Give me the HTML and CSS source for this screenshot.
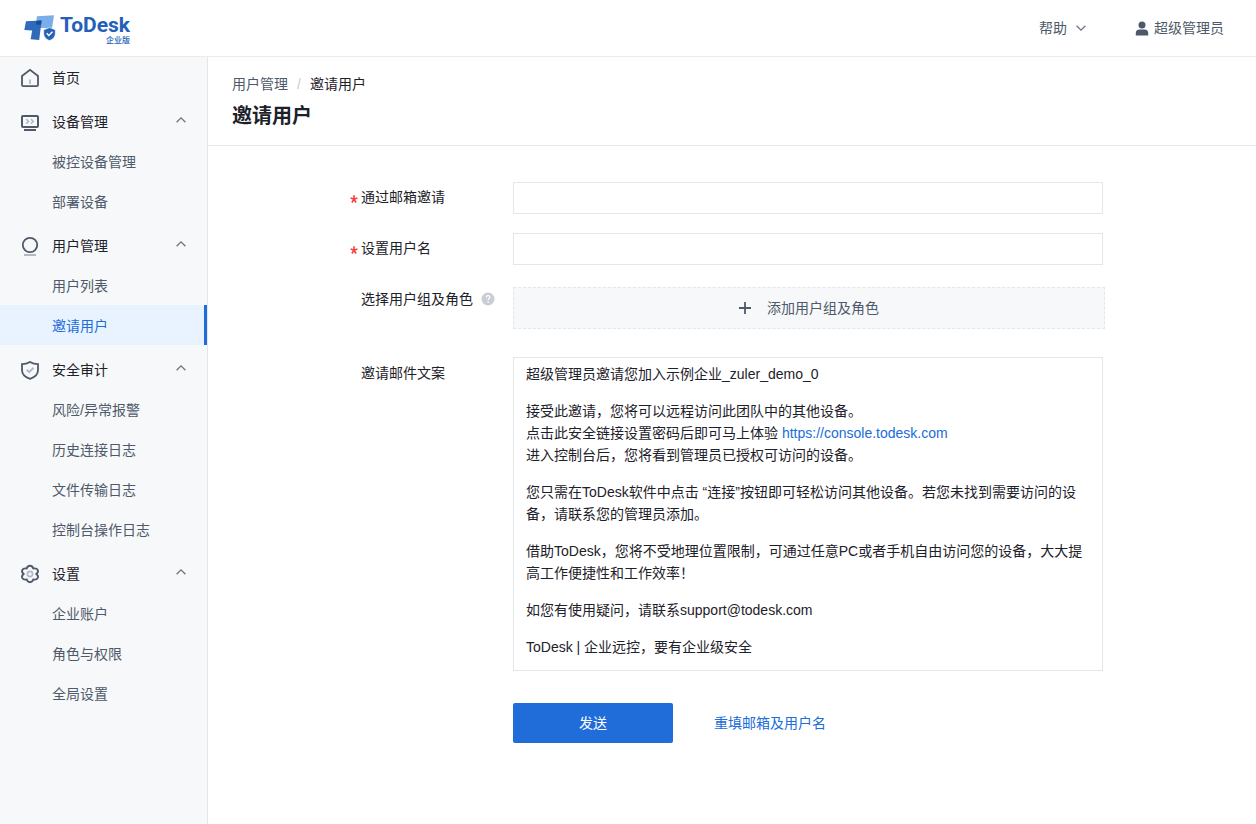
FILE: index.html
```html
<!DOCTYPE html>
<html lang="zh-CN">
<head>
<meta charset="utf-8">
<meta name="viewport" content="width=device-width, initial-scale=1">
<title>邀请用户 - ToDesk 企业版</title>
<link rel="stylesheet" href="styles.css">
</head>
<body>
<svg class="sprite" aria-hidden="true">
  <symbol id="chevron" viewBox="0 0 12 8"><path d="M1.600 6.200 6 1.900l4.400 4.300" fill="none" stroke="currentColor" stroke-width="1.300"/></symbol>
  <symbol id="asterisk" viewBox="0 0 8 8"><path d="M4 .2v4M.6 3l3.400 1.200L7.400 3M1.900 7.500 4 4.200l2.100 3.300" fill="none" stroke="currentColor" stroke-width="1.600"/></symbol>
</svg>
<div class="app">
  <header class="topbar">
    <a class="logo" href="#">
      <svg class="logo-mark" viewBox="0 0 32 26" aria-hidden="true">
        <path d="M13 1.200 30 .300 28 13H11.500z" fill="#7aade9"/>
        <path d="M2 6.200 17.600 5.400 15.200 25 6.600 24.300 8.200 15.600.300 15z" fill="#2f6abb"/>
        <path d="M12.500 5.700 17.600 5.400 17 9.800H12z" fill="#184c98"/>
        <path d="M25.500 12.600 31.300 14.800V19c0 3-2.400 5.200-5.800 6.600-3.400-1.400-5.800-3.600-5.800-6.600v-4.200z" fill="#2563b8" stroke="#fff" stroke-width=".6"/>
        <path d="m22.700 18.300 2.100 2.100 3.700-3.600" fill="none" stroke="#fff" stroke-width="1.400"/>
      </svg>
      <span class="logo-text"><span class="logo-name">ToDesk</span><span class="logo-edition">企业版</span></span>
    </a>
    <div class="top-actions">
      <button class="top-button" type="button">帮助<svg class="chevron chevron-down"><use href="#chevron"/></svg></button>
      <button class="top-button account" type="button">
        <svg class="person" viewBox="0 0 14 15" aria-hidden="true"><circle cx="7" cy="3.900" r="3.500" fill="currentColor"/><path d="M.8 14.600V12c0-2.200 1.400-3.600 3.600-3.600h5.200c2.200 0 3.600 1.400 3.600 3.600v2.600z" fill="currentColor"/></svg>超级管理员</button>
    </div>
  </header>

  <div class="body">
    <nav class="sidebar" aria-label="主导航">
      <a class="nav-head" href="#">
        <svg class="nav-icon" viewBox="0 0 20 20"><path d="M2 8 10 1.800 18 8v9q0 1.200-1.200 1.200H3.200Q2 18.200 2 17z" fill="none" stroke="#4e5969" stroke-width="1.800"/><path d="M10 11.500V16" stroke="#b4b9c2" stroke-width="1.700"/></svg>
        <span>首页</span>
      </a>

      <section class="nav-group">
        <button class="nav-head" type="button" aria-expanded="true">
          <svg class="nav-icon" viewBox="0 0 20 20"><rect x="2" y="4" width="16" height="11" rx="1" fill="none" stroke="#4e5969" stroke-width="2"/><path d="M4 18h12" stroke="#4e5969" stroke-width="2"/><path d="m6.300 7.200 2.300 2.200-2.300 2.200M11 7.200l2.300 2.200-2.300 2.200" fill="none" stroke="#b4b9c2" stroke-width="1.600"/></svg>
          <span>设备管理</span><svg class="chevron"><use href="#chevron"/></svg>
        </button>
        <a class="nav-item" href="#">被控设备管理</a>
        <a class="nav-item" href="#">部署设备</a>
      </section>

      <section class="nav-group">
        <button class="nav-head" type="button" aria-expanded="true">
          <svg class="nav-icon" viewBox="0 0 20 20"><circle cx="10" cy="9" r="7.200" fill="none" stroke="#4e5969" stroke-width="1.800"/><path d="M4 19h12" stroke="#b4b9c2" stroke-width="2"/></svg>
          <span>用户管理</span><svg class="chevron"><use href="#chevron"/></svg>
        </button>
        <a class="nav-item" href="#">用户列表</a>
        <a class="nav-item active" href="#" aria-current="page">邀请用户</a>
      </section>

      <section class="nav-group">
        <button class="nav-head" type="button" aria-expanded="true">
          <svg class="nav-icon" viewBox="0 0 20 20"><path d="M10 1.900q3.500 2.200 8 2.200V10c0 4.300-3.400 7.300-8 8.800C5.400 17.300 2 14.300 2 10V4.100q4.500 0 8-2.200z" fill="none" stroke="#4e5969" stroke-width="1.800"/><path d="m6.800 9.800 2.400 2.300 4.300-4.300" fill="none" stroke="#b4b9c2" stroke-width="2"/></svg>
          <span>安全审计</span><svg class="chevron"><use href="#chevron"/></svg>
        </button>
        <a class="nav-item" href="#">风险/异常报警</a>
        <a class="nav-item" href="#">历史连接日志</a>
        <a class="nav-item" href="#">文件传输日志</a>
        <a class="nav-item" href="#">控制台操作日志</a>
      </section>

      <section class="nav-group">
        <button class="nav-head" type="button" aria-expanded="true">
          <svg class="nav-icon" viewBox="0 0 20 20"><path d="M16.400 10Q18.600 8.200 17.800 6.200 16.600 3.800 13.300 4.500 12.300 1.800 10 1.800T6.700 4.500Q3.400 3.800 2.200 6.200 1.400 8.200 3.600 10 1.400 11.800 2.200 13.800 3.400 16.200 6.700 15.500 7.700 18.200 10 18.200T13.300 15.500Q16.600 16.200 17.800 13.800 18.600 11.800 16.400 10z" fill="none" stroke="#4e5969" stroke-width="1.900"/><circle cx="10" cy="10" r="2.600" fill="none" stroke="#b4b9c2" stroke-width="1.700"/></svg>
          <span>设置</span><svg class="chevron"><use href="#chevron"/></svg>
        </button>
        <a class="nav-item" href="#">企业账户</a>
        <a class="nav-item" href="#">角色与权限</a>
        <a class="nav-item" href="#">全局设置</a>
      </section>
    </nav>

    <main class="content">
      <div class="page-head">
        <div class="breadcrumb"><a href="#">用户管理</a><span class="slash">/</span><span>邀请用户</span></div>
        <h1>邀请用户</h1>
      </div>

      <form class="invite-form">
        <div class="row">
          <label class="label required" for="email"><svg class="asterisk" aria-hidden="true"><use href="#asterisk"/></svg>通过邮箱邀请</label>
          <input class="text-input" id="email" type="text" required>
        </div>
        <div class="row">
          <label class="label required" for="username"><svg class="asterisk" aria-hidden="true"><use href="#asterisk"/></svg>设置用户名</label>
          <input class="text-input" id="username" type="text" required>
        </div>
        <div class="row group-row">
          <label class="label" for="add-group">选择用户组及角色<svg class="help" viewBox="0 0 14 14" aria-hidden="true"><circle cx="7" cy="7" r="6.500" fill="#c9cdd4"/><path d="M5.200 5.500c.1-1.200.8-1.800 1.900-1.800s1.800.6 1.800 1.600c0 1.300-1.800 1.300-1.800 2.700" fill="none" stroke="#fff" stroke-width="1.200"/><circle cx="7.100" cy="9.900" r=".8" fill="#fff"/></svg></label>
          <button class="add-button" id="add-group" type="button"><svg class="plus" viewBox="0 0 12 12" aria-hidden="true"><path d="M0 6h12M6 0v12" stroke="currentColor" stroke-width="1.800"/></svg>添加用户组及角色</button>
        </div>
        <div class="row mail-row">
          <span class="label mail-label" id="mail-label">邀请邮件文案</span>
          <div class="mail" role="group" aria-labelledby="mail-label">
            <p>超级管理员邀请您加入示例企业_zuler_demo_0</p>
            <p>接受此邀请，您将可以远程访问此团队中的其他设备。<br>点击此安全链接设置密码后即可马上体验 <a href="#">https://console.todesk.com</a><br>进入控制台后，您将看到管理员已授权可访问的设备。</p>
            <p>您只需在ToDesk软件中点击 “连接”按钮即可轻松访问其他设备。若您未找到需要访问的设备，请联系您的管理员添加。</p>
            <p>借助ToDesk，您将不受地理位置限制，可通过任意PC或者手机自由访问您的设备，大大提高工作便捷性和工作效率！</p>
            <p>如您有使用疑问，请联系support@todesk.com</p>
            <p>ToDesk | 企业远控，要有企业级安全</p>
          </div>
        </div>
        <div class="actions">
          <button class="send" type="button">发送</button>
          <button class="reset" type="reset">重填邮箱及用户名</button>
        </div>
      </form>
    </main>
  </div>
</div>
</body>
</html>
```
FILE: styles.css
```css
* { box-sizing: border-box; }

body {
  margin: 0;
  font: 14px/22px "Liberation Sans", "Noto Sans CJK SC", sans-serif;
  color: #1d2129;
  background: #fff;
}

a { color: inherit; text-decoration: none; }

button {
  margin: 0;
  padding: 0;
  border: 0;
  background: none;
  color: inherit;
  font: inherit;
  cursor: pointer;
}

.sprite { display: none; }

.app {
  display: flex;
  flex-direction: column;
  min-height: 100vh;
}

.topbar {
  display: flex;
  align-items: center;
  justify-content: space-between;
  height: 57px;
  padding: 0 32px 0 24px;
  border-bottom: 1px solid #ebebeb;
}

.logo { display: flex; align-items: center; gap: 4px; color: #2460b8; }
.logo-mark { width: 32px; height: 26px; }
.logo-text { display: flex; flex-direction: column; padding-top: 4px; }
.logo-name { font: 700 21px/22px Roboto, sans-serif; }
.logo-edition {
  font-size: 8px;
  font-weight: 500;
  line-height: 10px;
  text-align: right;
}

.top-actions { display: flex; gap: 48px; color: #4e5969; }
.top-button { display: flex; align-items: center; gap: 8px; }
.account { gap: 5px; }
.person { width: 14px; height: 15px; }

.chevron { width: 12px; height: 8px; color: #6b7280; }
.chevron-down { transform: rotate(180deg); }

.body { display: flex; flex: 1; }

.sidebar {
  flex: none;
  width: 208px;
  border-right: 1px solid #e5e6eb;
  background: #f7f8fa;
}

.nav-group { margin-top: 4px; }

.nav-head {
  display: flex;
  align-items: center;
  gap: 12px;
  width: 100%;
  height: 40px;
  padding: 2px 20px 0;
}

.nav-icon { width: 20px; height: 20px; }
.nav-head .chevron { margin: 0 0 4px auto; }

.nav-item {
  display: block;
  height: 40px;
  padding-left: 52px;
  color: #4e5969;
  line-height: 42px;
}

.nav-item.active {
  border-right: 3px solid #206cd9;
  background: #e8f3ff;
  color: #206cd9;
}

.content { flex: 1; min-width: 0; }

.page-head {
  padding: 16px 24px 15px;
  border-bottom: 1px solid #e5e6eb;
}

.breadcrumb { display: flex; gap: 9px; }
.breadcrumb a { color: #4e5969; }
.slash { color: #c9cdd4; }

h1 {
  margin: 7px 0 0;
  font-size: 20px;
  line-height: 28px;
}

.invite-form {
  display: flex;
  flex-direction: column;
  gap: 19px;
  max-width: 764px;
  margin: 0 auto;
  padding: 36px 11px 36px 0;
}

.row {
  display: grid;
  grid-template-columns: 163px minmax(0, 1fr);
  align-items: start;
}

.group-row { margin-top: 3px; }
.mail-row { margin-top: 9px; }

.label {
  display: flex;
  align-items: center;
  padding: 4px 0 4px 11px;
}

.label.required { padding-left: 0; }
.group-row .label { padding-top: 1px; }
.mail-label { padding-top: 5px; }

.asterisk {
  width: 8px;
  height: 8px;
  margin: 3px 3px 0 0;
  color: #f53f3f;
}

.help { width: 14px; height: 14px; margin-left: 8px; }

.text-input {
  width: 100%;
  height: 32px;
  padding: 0 12px;
  border: 1px solid #e5e6eb;
  background: #fff;
  font: inherit;
}

.add-button {
  box-sizing: content-box;
  display: flex;
  align-items: center;
  justify-content: center;
  gap: 16px;
  width: 100%;
  height: 40px;
  border: 1px dashed #e5e6eb;
  background: #f7f8fa;
  color: #4e5969;
}

.plus { width: 12px; height: 12px; }

.mail {
  padding: 5px 12px 12px;
  border: 1px solid #e5e6eb;
}

.mail p { margin: 0 0 15px; }
.mail p:last-child { margin: 0; }
.mail a { color: #206cd9; }

.actions {
  display: flex;
  gap: 41px;
  margin-top: 13px;
  padding-left: 163px;
}

.send {
  width: 160px;
  height: 40px;
  border-radius: 2px;
  background: #206cd9;
  color: #fff;
}

.reset { color: #206cd9; }
```
